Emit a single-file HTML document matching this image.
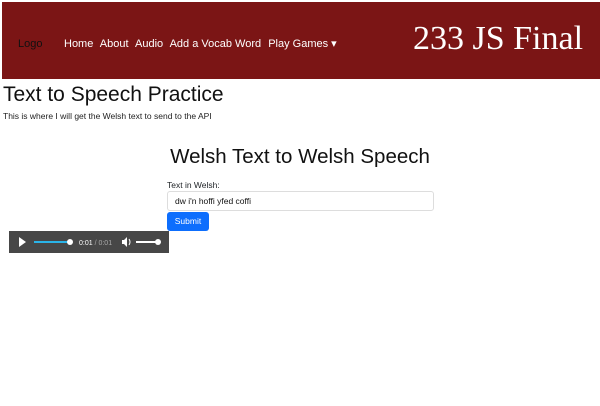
<!DOCTYPE html>
<html><head><style>
body{margin:0;width:600px;height:406px;background:#fff;font-family:"Liberation Sans",sans-serif;position:relative;overflow:hidden;color:#212529}
.hdr{position:absolute;left:2px;top:2px;width:598px;height:77px;background:#7b1515}
.logo{position:absolute;left:16px;top:36px;font-size:11px;color:#111}
.nav{position:absolute;left:62px;top:35px;font-size:11px;color:#fff;white-space:nowrap;font-weight:500}
.nav span{margin-right:4px}
.title{position:absolute;left:411px;top:18px;font-family:"Liberation Serif",serif;font-size:34px;color:#fff}
h1{position:absolute;left:3px;top:83px;margin:0;font-size:21px;font-weight:400;color:#111}
p{position:absolute;left:3px;top:111px;margin:0;font-size:8.5px;color:#222}
h2{position:absolute;left:0;width:600px;text-align:center;top:145px;margin:0;font-size:20.5px;font-weight:400;color:#111}
.lbl{position:absolute;left:167px;top:180px;font-size:8.5px}
.inp{position:absolute;left:167px;top:191px;width:267px;height:20px;border:1px solid #ddd;border-radius:3px;box-sizing:border-box;font-size:8.5px;padding:4px 7px;color:#111}
.btn{position:absolute;left:167px;top:212px;width:42px;height:19px;background:#0d6efd;border-radius:3px;color:#fff;font-size:8.5px;text-align:center;line-height:19px}
.aud{position:absolute;left:9px;top:231px;width:160px;height:22px;background:#474747}
</style></head><body>
<div class="hdr">
<div class="logo">Logo</div>
<div class="nav"><span>Home</span> <span>About</span> <span>Audio</span> <span>Add a Vocab Word</span> <span>Play Games ▾</span></div>
<div class="title">233 JS Final</div>
</div>
<h1>Text to Speech Practice</h1>
<p>This is where I will get the Welsh text to send to the API</p>
<h2>Welsh Text to Welsh Speech</h2>
<div class="lbl">Text in Welsh:</div>
<div class="inp">dw i'n hoffi yfed coffi</div>
<div class="btn">Submit</div>
<div class="aud">
<svg width="160" height="22" style="position:absolute;left:0;top:0">
<polygon points="10,6 10,16 17,11" fill="#fff"/>
<rect x="25" y="10" width="36" height="2" fill="#2ab4e8"/>
<circle cx="61" cy="11" r="3" fill="#fff"/>
<text x="70" y="14" font-size="7" fill="#fff" font-family="Liberation Sans">0:01 <tspan fill="#aaa">/ 0:01</tspan></text>
<polygon points="113,9 115,9 118,6 118,16 115,13 113,13" fill="#fff"/>
<path d="M120,8 Q122,11 120,14" stroke="#fff" fill="none"/>
<rect x="127" y="10" width="22" height="2" fill="#fff"/>
<circle cx="149" cy="11" r="3" fill="#fff"/>
</svg></div>
</body></html>
